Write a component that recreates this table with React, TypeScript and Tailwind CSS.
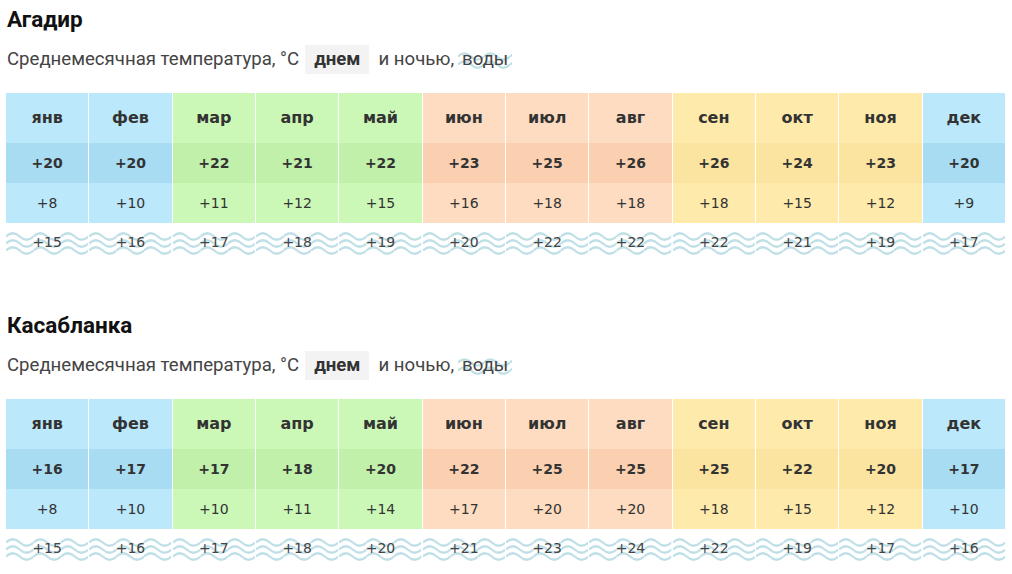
import React from 'react';

type Season = 'blue' | 'green' | 'peach' | 'yellow';

const seasonColors: Record<Season, { head: string; day: string; night: string }> = {
  blue: { head: 'bg-[#bbe8fb]', day: 'bg-[#a8dcf3]', night: 'bg-[#bbe8fb]' },
  green: { head: 'bg-[#ccf8b7]', day: 'bg-[#c0f0aa]', night: 'bg-[#ccf8b7]' },
  peach: { head: 'bg-[#fddcc1]', day: 'bg-[#fbd0b1]', night: 'bg-[#fddcc1]' },
  yellow: { head: 'bg-[#feeaab]', day: 'bg-[#fbe3a0]', night: 'bg-[#feeaab]' },
};

const months: { name: string; season: Season }[] = [
  { name: 'янв', season: 'blue' },
  { name: 'фев', season: 'blue' },
  { name: 'мар', season: 'green' },
  { name: 'апр', season: 'green' },
  { name: 'май', season: 'green' },
  { name: 'июн', season: 'peach' },
  { name: 'июл', season: 'peach' },
  { name: 'авг', season: 'peach' },
  { name: 'сен', season: 'yellow' },
  { name: 'окт', season: 'yellow' },
  { name: 'ноя', season: 'yellow' },
  { name: 'дек', season: 'blue' },
];

const cities = [
  {
    name: 'Агадир',
    day: [20, 20, 22, 21, 22, 23, 25, 26, 26, 24, 23, 20],
    night: [8, 10, 11, 12, 15, 16, 18, 18, 18, 15, 12, 9],
    water: [15, 16, 17, 18, 19, 20, 22, 22, 22, 21, 19, 17],
  },
  {
    name: 'Касабланка',
    day: [16, 17, 17, 18, 20, 22, 25, 25, 25, 22, 20, 17],
    night: [8, 10, 10, 11, 14, 17, 20, 20, 18, 15, 12, 10],
    water: [15, 16, 17, 18, 20, 21, 23, 24, 22, 19, 17, 16],
  },
];

// wavy background drawing, restarted in every cell
const Waves = ({ lines = 3, id, period = 27.5 }: { lines?: number; id: string; period?: number }) => {
  const ys = lines === 3 ? [6, 13, 20] : [8, 16];
  const h = period / 2;
  return (
    <svg className="absolute inset-0 h-full w-full">
      <defs>
        <pattern id={id} width={period} height="26" patternUnits="userSpaceOnUse">
          {ys.map((y) => (
            <path
              key={y}
              d={`M0 ${y + 1.5} Q${h / 2} ${y - 5} ${h} ${y + 1.5} T${period} ${y + 1.5}`}
              fill="none"
              stroke="#bfdfe6"
              strokeWidth="2.2"
            />
          ))}
        </pattern>
      </defs>
      <rect width="100%" height="100%" fill={`url(#${id})`} />
    </svg>
  );
};

const fmt = (n: number) => `+${n}`;

const CityBlock = ({ city, idx }: { city: (typeof cities)[number]; idx: number }) => (
  <section className="pl-[7px]">
    <h2 className="h-[40px] flex items-center text-[22.5px] font-bold text-[#111] font-['Roboto',sans-serif]">
      {city.name}
    </h2>
    <div className="mt-[5px] h-[29px] flex items-center text-[18.6px] text-[#444] font-['Roboto',sans-serif]">
      <span>Среднемесячная температура, °C</span>
      <span className="ml-[6px] h-[29px] px-[9px] flex items-center bg-[#f3f3f3] font-bold text-[#333]">днем</span>
      <span className="ml-[9px]">и ночью,</span>
      <span className="relative ml-[4px] h-[26px] w-[54px] flex items-center justify-center">
        <Waves lines={2} id={`lbl-${idx}`} period={26} />
        <span className="relative">воды</span>
      </span>
    </div>
    <div className="mt-[19px] w-[999px] -ml-px grid grid-cols-12 gap-x-px font-['DejaVu_Sans',Verdana,sans-serif] text-[#333]">
      {months.map((m, i) => {
        const c = seasonColors[m.season];
        return (
          <div key={m.name} className="flex flex-col">
            <div className={`${c.head} h-[50px] flex items-center justify-center text-[16px] font-bold`}>{m.name}</div>
            <div className={`${c.day} h-[40px] flex items-center justify-center text-[14px] font-bold`}>{fmt(city.day[i])}</div>
            <div className={`${c.night} h-[40px] flex items-center justify-center text-[14px]`}>{fmt(city.night[i])}</div>
            <div className="relative mt-[6px] h-[26px] flex items-center justify-center text-[14px] text-[#444]">
              <Waves id={`w-${idx}-${i}`} />
              <span className="relative">{fmt(city.water[i])}</span>
            </div>
          </div>
        );
      })}
    </div>
  </section>
);

export default function App() {
  return (
    <div className="w-[1012px] h-[574px] bg-white overflow-hidden flex flex-col gap-[51px]">
      {cities.map((c, i) => (
        <CityBlock key={c.name} city={c} idx={i} />
      ))}
    </div>
  );
}
